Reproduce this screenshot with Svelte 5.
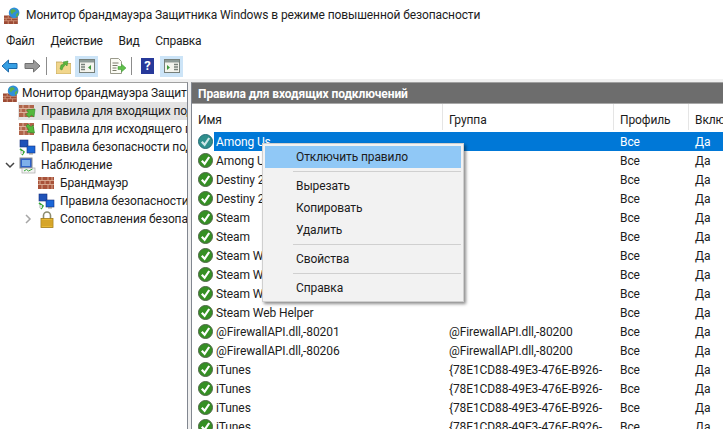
<script>
  const helper = 'Steam Web Helper';
  const itunesGroup = '{78E1CD88-49E3-476E-B926-';
  const rules = [
    ['Among Us', '', true],
    ['Among Us', ''],
    ['Destiny 2', ''],
    ['Destiny 2', ''],
    ['Steam', ''],
    ['Steam', ''],
    [helper, ''],
    [helper, ''],
    [helper, ''],
    [helper, ''],
    ['@FirewallAPI.dll,-80201', '@FirewallAPI.dll,-80200'],
    ['@FirewallAPI.dll,-80206', '@FirewallAPI.dll,-80200'],
    ['iTunes', itunesGroup],
    ['iTunes', itunesGroup],
    ['iTunes', itunesGroup],
    ['iTunes', itunesGroup]
  ];
  const menu = ['Файл', 'Действие', 'Вид', 'Справка'];
</script>

{#snippet wall()}
  <svg width="17" height="15" viewBox="0 0 17 15">
    <rect x="0" y="1" width="16" height="12" fill="#a8523a" />
    <path d="M0 4.500h16M0 8.500h16M4 1v3.500M10 1v3.500M14 1v3.500M2 4.500v4M7 4.500v4M12 4.500v4M4 8.500v4.500M10 8.500v4.500M14 8.500v4.500" stroke="#d8a78e" fill="none" />
  </svg>
{/snippet}

{#snippet globeWall()}
  <svg width="17" height="17" viewBox="0 0 16 16">
    <rect x="0" y="8" width="13" height="8" fill="#9c4a34" />
    <path d="M0 10.500h13M0 13h13M4 8v2.500M9 8v2.500M2 10.500v2.500M7 10.500v2.500M4 13v3M9 13v3" stroke="#c98a70" fill="none" />
    <circle cx="9.500" cy="5.500" r="5" fill="#2f8fd8" />
    <path d="M6 3.500c2-2 4-1.500 5 0-.5 2-2.500 1-3 3-1 1-2-1.500-2-3zM11 7l2.500-2c.5 2-.5 4-2 4.500z" fill="#5cae4c" />
  </svg>
{/snippet}

{#snippet arrowWall(up)}
  <svg width="17" height="16" viewBox="0 0 17 16">
    <rect x="0" y="2" width="15" height="12" fill="#b0644a" />
    <path d="M0 5.500h15M0 9.500h15M4 2v3.500M10 2v3.500M2 5.500v4M7 5.500v4M12 5.500v4M5 9.500v4.500M10 9.500v4.500" stroke="#dcb59e" fill="none" />
    {#if up}
      <path d="M16 6l-1 8-2.500-2-2.500 2.500-3-3 2.500-2.500-2-2z" fill="#55b83c" stroke="#2f8a2a" stroke-width=".6" />
    {:else}
      <path d="M7 5l2-2 3 3 2-2 1.500 8-7.500-1 2-2z" fill="#55b83c" stroke="#2f8a2a" stroke-width=".6" />
    {/if}
  </svg>
{/snippet}

{#snippet screens()}
  <svg width="17" height="17" viewBox="0 0 17 17">
    <rect x="1" y="1" width="8" height="7" fill="#1f52b8" stroke="#17307c" stroke-width=".6" />
    <rect x="8" y="7" width="8" height="7" fill="#1a66d8" stroke="#17307c" stroke-width=".6" />
    <path d="M10 14h4v1.500h-4z" fill="#9a9a9a" />
    <path d="M1 10l4 3-2 3" stroke="#3aa83a" stroke-width="1.600" fill="none" />
    <path d="M1 12h3v3H1z" fill="#d8d8d8" />
  </svg>
{/snippet}

{#snippet monitorIcon()}
  <svg width="17" height="17" viewBox="0 0 17 17">
    <rect x="1" y="1" width="12" height="10" fill="#2f62c8" stroke="#8a8a8a" />
    <rect x="3" y="3" width="8" height="6" fill="#7fb0ea" />
    <rect x="3" y="11" width="13" height="5" fill="#f2f2f2" stroke="#a8a8a8" stroke-width=".7" />
    <path d="M5 14l2.500-1.500 2 1.500 4-2" stroke="#3aa83a" fill="none" />
  </svg>
{/snippet}

{#snippet lock()}
  <svg width="14" height="17" viewBox="0 0 14 17">
    <path d="M3.500 8V4.500a3.500 3.500 0 0 1 7 0V8" fill="none" stroke="#8c8c70" stroke-width="1.600" />
    <rect x="1" y="7.500" width="12" height="9" fill="#e8b832" stroke="#a07a18" stroke-width=".8" />
    <path d="M1.500 10h11M1.500 12h11M1.500 14h11" stroke="#c49220" />
  </svg>
{/snippet}

{#snippet check(selected)}
  <svg class="check" width="15" height="15" viewBox="0 0 15 15">
    <circle cx="7.500" cy="7.500" r="7" fill={selected ? '#2f8f8c' : '#358f24'} stroke={selected ? '#246c78' : '#4e6646'} />
    <path d="M3.800 7.800l2.800 3L11.200 4" fill="none" stroke={selected ? '#cfe6e8' : '#ffffff'} stroke-width="2.200" />
  </svg>
{/snippet}

{#snippet panelIcon(right)}
  <svg width="16" height="14" viewBox="0 0 16 14">
    <rect x=".5" y=".5" width="15" height="13" fill="#f4f4ee" stroke="#77807a" />
    <rect x="1" y="1" width="14" height="2.500" fill="#8d9a96" />
    {#if right}
      <path d="M3 6v5l3-2.500z" fill="#3f9a3c" />
      <path d="M10 5.500h4M10 8h4M10 10.500h4" stroke="#77807a" stroke-width="1.300" />
    {:else}
      <path d="M2 5.500h4M2 8h4M2 10.500h4" stroke="#77807a" stroke-width="1.300" />
      <path d="M12 6v5l-3-2.500z" fill="#3f9a3c" />
    {/if}
  </svg>
{/snippet}

<div class="window">
  <header class="title">
    <span class="title-icon">{@render globeWall()}</span>
    <span>Монитор брандмауэра Защитника Windows в режиме повышенной безопасности</span>
  </header>

  <nav class="menubar">
    {#each menu as m}<span>{m}</span>{/each}
  </nav>

  <div class="toolbar">
    <svg class="tool back" width="17" height="14" viewBox="0 0 17 14">
      <path d="M1 7l6.500-6v3.500H16v5H7.500V13z" fill="#37a0e4" stroke="#1d68a8" />
    </svg>
    <svg class="tool fwd" width="17" height="14" viewBox="0 0 17 14">
      <path d="M16 7L9.500 1v3.500H1v5h8.500V13z" fill="#9a9a9a" stroke="#707070" />
    </svg>
    <i class="sep s1"></i>
    <svg class="tool folder" width="15" height="16" viewBox="0 0 15 16">
      <path d="M0 4h6l1 1.500h8V16H0z" fill="#f1d68c" stroke="#bfa35a" stroke-width=".8" />
      <path d="M4 11l1-4 3-1-1-2 5-1-1 5-1.500-1.500L7 9.500 6 12z" fill="#5cb63c" stroke="#3a8a2a" stroke-width=".5" />
    </svg>
    <span class="tool-on on1">{@render panelIcon(false)}</span>
    <svg class="tool doc" width="17" height="17" viewBox="0 0 17 17">
      <path d="M1.500.500h8l3 3v12h-11z" fill="#fbfbf4" stroke="#9a9a8c" />
      <path d="M3.500 5h6M3.500 7.500h5M3.500 10h4M3.500 12.500h4" stroke="#7a7a6a" />
      <path d="M9 8.500h3.500V6L17 10l-4.500 4v-2.500H9z" fill="#5fc04a" stroke="#3d9a35" stroke-width=".5" />
    </svg>
    <i class="sep s2"></i>
    <span class="help">?</span>
    <span class="tool-on on2">{@render panelIcon(true)}</span>
  </div>

  <div class="main">
    <aside class="tree">
      <div class="node">
        <span class="ico">{@render globeWall()}</span><span>Монитор брандмауэра Защитника Windows</span>
      </div>
      <div class="node lvl1 current">
        <span class="ico">{@render arrowWall(true)}</span><span>Правила для входящих подключений</span>
      </div>
      <div class="node lvl1">
        <span class="ico">{@render arrowWall(false)}</span><span>Правила для исходящего подключения</span>
      </div>
      <div class="node lvl1">
        <span class="ico">{@render screens()}</span><span>Правила безопасности подключения</span>
      </div>
      <div class="node lvl1">
        <svg class="twisty" width="10" height="7" viewBox="0 0 10 7"><path d="M1 1l4 4 4-4" fill="none" stroke="#444" stroke-width="1.500" /></svg>
        <span class="ico">{@render monitorIcon()}</span><span>Наблюдение</span>
      </div>
      <div class="node lvl2">
        <span class="ico">{@render wall()}</span><span>Брандмауэр</span>
      </div>
      <div class="node lvl2">
        <span class="ico">{@render screens()}</span><span>Правила безопасности подключения</span>
      </div>
      <div class="node lvl2">
        <svg class="twisty" width="7" height="10" viewBox="0 0 7 10"><path d="M1 1l4 4-4 4" fill="none" stroke="#a6a6a6" stroke-width="1.500" /></svg>
        <span class="ico">{@render lock()}</span><span>Сопоставления безопасности</span>
      </div>
    </aside>

    <section class="panel">
      <h1>Правила для входящих подключений</h1>
      <div class="head row">
        <span class="c-name">Имя</span>
        <span class="c-group">Группа</span>
        <span class="c-prof">Профиль</span>
        <span class="c-on">Включ</span>
      </div>
      <div class="rows">
        {#each rules as [name, group, selected]}
          <div class="row" class:selected>
            <span class="c-name">
              {@render check(selected)}
              <span class="name">{name}</span>
            </span>
            <span class="c-group">{group}</span>
            <span class="c-prof">Все</span>
            <span class="c-on">Да</span>
          </div>
        {/each}
      </div>
    </section>
  </div>

  <div class="context">
    <div class="item hot">Отключить правило</div>
    <hr />
    <div class="item">Вырезать</div>
    <div class="item">Копировать</div>
    <div class="item">Удалить</div>
    <hr />
    <div class="item">Свойства</div>
    <hr />
    <div class="item">Справка</div>
  </div>
</div>

<style>
  :global(body) {
    margin: 0;
    background: #fff;
  }

  .window {
    position: relative;
    width: 723px;
    height: 429px;
    overflow: hidden;
    font: 12px Roboto, "Noto Sans", sans-serif;
    letter-spacing: -0.1px;
    color: #1c1c1c;
    background: #fff;
  }

  .title {
    display: flex;
    align-items: center;
    gap: 5px;
    height: 30px;
    padding-left: 4px;
  }

  .title-icon {
    display: flex;
  }

  .menubar {
    display: flex;
    gap: 16px;
    height: 22px;
    padding: 0 0 1px 6px;
    align-items: center;
    letter-spacing: -0.3px;
  }

  .toolbar {
    display: flex;
    align-items: center;
    height: 26px;
    border-bottom: 3px solid #f0f0f0;
  }

  .tool {
    flex: none;
  }

  .back {
    margin-left: 1px;
  }

  .fwd {
    margin-left: 6px;
  }

  .sep {
    width: 1px;
    height: 18px;
    background: #8c8c8c;
  }

  .s1,
  .s2 {
    margin: 0 9px 0 5px;
  }

  .tool-on {
    display: flex;
    align-items: center;
    justify-content: center;
    width: 23px;
    height: 21px;
    background: #cce4f7;
  }

  .on1 {
    margin-left: 4px;
  }

  .doc {
    margin-left: 11px;
  }

  .help {
    width: 13px;
    height: 16px;
    background: #27399a;
    color: #fff;
    font-weight: 700;
    font-size: 13px;
    line-height: 16px;
    text-align: center;
  }

  .on2 {
    margin-left: 6px;
  }

  .main {
    display: flex;
    height: 347px;
    background: #f0f0f0;
    gap: 3px;
  }

  .tree {
    width: 187px;
    flex: none;
    border-top: 1px solid #a0a0a0;
    border-right: 1px solid #828790;
    background: #fff;
    padding-top: 1px;
    overflow: hidden;
  }

  .node {
    position: relative;
    display: flex;
    align-items: center;
    height: 18px;
    padding-left: 3px;
    white-space: nowrap;
    overflow: hidden;
  }

  .ico {
    display: flex;
    flex: none;
    width: 17px;
    margin-right: 2px;
    justify-content: center;
  }

  .lvl1,
  .lvl2 {
    gap: 3px;
  }

  .lvl1 {
    padding-left: 19px;
  }

  .lvl2 {
    padding-left: 38px;
  }

  .current {
    background: #e3e3e3;
    margin-left: 18px;
    padding-left: 1px;
  }

  .twisty {
    position: absolute;
    left: 5px;
    top: 6px;
  }

  .lvl2 .twisty {
    left: 25px;
    top: 4px;
  }

  .panel {
    flex: 1;
    min-width: 0;
    background: #fff;
    border-top: 1px solid #a0a0a0;
    border-left: 1px solid #828790;
  }

  h1 {
    margin: 0;
    height: 20px;
    line-height: 22px;
    padding-left: 6px;
    font-size: 12px;
    font-weight: 700;
    color: #fff;
    background: #6d6d6d;
    border-bottom: 1px solid #a8a8a8;
  }

  .row {
    display: flex;
    height: 19px;
    line-height: 21px;
    white-space: nowrap;
  }

  .head {
    height: 28px;
    line-height: 33px;
  }

  .head span {
    box-sizing: border-box;
    padding-left: 6px;
    border-right: 1px solid #e5e5e5;
    height: 26px;
  }

  .c-name {
    width: 251px;
    flex: none;
    display: flex;
  }

  .c-group {
    width: 171px;
    flex: none;
    padding-left: 6px;
    box-sizing: border-box;
    overflow: hidden;
  }

  .c-prof {
    width: 75px;
    flex: none;
    padding-left: 6px;
    box-sizing: border-box;
  }

  .c-on {
    width: 40px;
    flex: none;
    padding-left: 6px;
    box-sizing: border-box;
  }

  .check {
    margin: 2px 2px 0 6px;
    flex: none;
  }

  .name {
    padding-left: 1px;
  }

  .selected {
    background: linear-gradient(to right, transparent 22px, #0078d7 22px);
    color: #fff;
  }

  .context {
    position: absolute;
    left: 262px;
    top: 143px;
    width: 196px;
    padding: 2px;
    background: #f2f2f2;
    border: 1px solid #cfcfcf;
    box-shadow: 2px 2px 3px rgba(0, 0, 0, 0.45);
  }

  .item {
    height: 22px;
    line-height: 22px;
    padding-left: 31px;
  }

  .hot {
    background: #90c8f6;
  }

  hr {
    margin: 3px 0 3px 28px;
    height: 1px;
    border: 0;
    background: #d0d0d0;
  }
</style>
